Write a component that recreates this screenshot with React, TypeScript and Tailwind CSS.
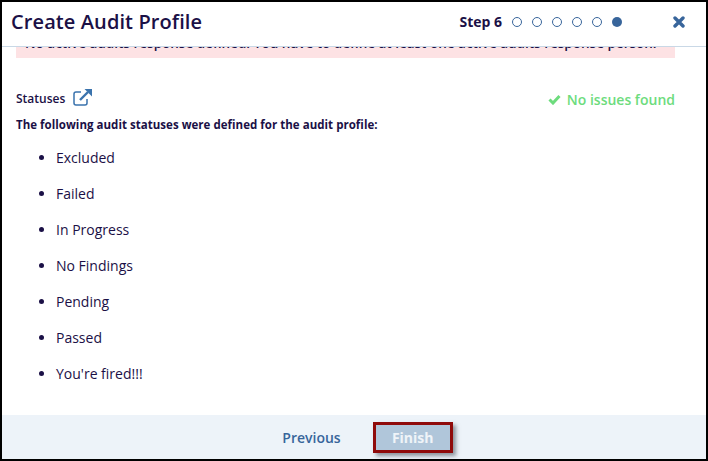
import React from "react";

const F = "font-['Open_Sans',sans-serif]";
const statuses = ["Excluded", "Failed", "In Progress", "No Findings", "Pending", "Passed", "You're fired!!!"];

export default function App() {
  return (
    <div className={`${F} w-[708px] h-[461px] border-2 border-black bg-white flex flex-col overflow-hidden text-[#1b1046]`}>
      <header className="h-[45px] shrink-0 flex items-center border-b border-[#c9d8e6] pl-[9px] pr-[20px] pb-[5px]">
        <h1 className="text-[20px] font-semibold leading-none text-[#1b1046] tracking-[0.1px]">Create Audit Profile</h1>
        <div className="ml-auto flex items-center">
          <span className="text-[14px] font-bold mr-[10px]">Step 6</span>
          <div className="flex gap-[10px] mr-[51px]">
            {[0, 1, 2, 3, 4].map((i) => (
              <span key={i} className="w-[10px] h-[10px] rounded-full border border-[#38659b]" />
            ))}
            <span className="w-[10px] h-[10px] rounded-full bg-[#38659b]" />
          </div>
          <svg width="12" height="12" viewBox="0 0 12 12" className="mr-[1px]">
            <path d="M2 2 L10 10 M10 2 L2 10" stroke="#38659b" strokeWidth="3.4" strokeLinecap="round" />
          </svg>
        </div>
      </header>
      <main className="flex-1 overflow-hidden px-[14px]">
        <div className="w-[659px] h-[11px] bg-[#fde2e4] overflow-hidden pl-[9px]">
          <p className="text-[13.5px] font-semibold leading-[16px] -mt-[12px] whitespace-nowrap">
            No active audits response defined. You have to define at least one active audits response person.
          </p>
        </div>
        <div className="w-[659px] flex items-center justify-between mt-[30px] h-[22px]">
          <div className="flex items-center">
            <span className="text-[12px] font-semibold">Statuses</span>
            <svg width="20" height="19" viewBox="0 0 20 19" fill="none" className="ml-[8px] -mt-[3px]">
              <path d="M8 4 H3 Q1 4 1 6 V15 Q1 17 3 17 H12 Q14 17 14 15 V11" stroke="#3a73ad" strokeWidth="1.5" />
              <path d="M7 12 L15 4" stroke="#3a73ad" strokeWidth="2.4" />
              <path d="M11.5 1 H19 V8.5 Z" fill="#3a73ad" />
            </svg>
          </div>
          <div className="flex items-center text-[14px] font-semibold text-[#6ddc7d]">
            <svg width="13" height="11" viewBox="0 0 13 11" className="mr-[6px]">
              <path d="M1.5 5.5 L5 9 L11.5 2" stroke="#6ddc7d" strokeWidth="3" fill="none" />
            </svg>
            No issues found
          </div>
        </div>
        <p className="text-[11.5px] tracking-[0.03px] font-bold leading-[16px] mt-[7px]">The following audit statuses were defined for the audit profile:</p>
        <ul className="list-disc pl-[40px] mt-[15px] text-[14px] leading-[20px] flex flex-col gap-[16px]">
          {statuses.map((s) => (
            <li key={s}>{s}</li>
          ))}
        </ul>
      </main>
      <footer className="h-[44px] shrink-0 bg-[#edf3f9] flex items-center justify-center gap-[32px] pl-[27px]">
        <button className="text-[14px] font-semibold text-[#38659b]">Previous</button>
        <button className="w-[80px] h-[31px] bg-[#b0c6da] border-[3px] border-[#8f0a0a] text-white/80 text-[14px] font-bold shadow-[3px_3px_4px_rgba(60,70,80,0.55)]">Finish</button>
      </footer>
    </div>
  );
}
